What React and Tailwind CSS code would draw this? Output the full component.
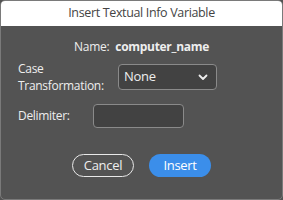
import React from 'react';

export default function App() {
  return (
    <div className="w-[283px] h-[200px] bg-[#535353] font-['Open_Sans',sans-serif]">
      <div className="w-full h-full flex flex-col rounded-[5px] border border-[#7a7a7a] overflow-hidden bg-[#535353]">
        {/* Title bar */}
        <div className="h-[25px] bg-white flex items-center justify-center text-[12.5px] text-[#444] tracking-[-0.35px]">
          Insert Textual Info Variable
        </div>

        <div className="flex-1 flex flex-col text-[#eeeeee] text-[12px] tracking-[-0.3px]">
          <div className="mt-[13px] flex justify-center gap-[6px] leading-[16px]">
            <span>Name:</span>
            <span className="font-bold">computer_name</span>
          </div>

          <div className="mt-[5px] pl-[17px] flex items-center">
            <div className="w-[100px] leading-[17px]">
              Case<br />Transformation:
            </div>
            <div className="w-[99px] h-[26px] rounded-[4px] border border-[#8a8a8a] bg-[#424242] flex items-center justify-between pl-[5px] pr-[8px] text-[13px]">
              <span>None</span>
              <svg width="10" height="7" viewBox="0 0 10 7" fill="none">
                <path d="M1.5 1.5 L5 5 L8.5 1.5" stroke="#eeeeee" strokeWidth="1.8" strokeLinecap="round" strokeLinejoin="round" />
              </svg>
            </div>
          </div>

          <div className="mt-[10px] pl-[17px] flex items-center">
            <div className="w-[75px]">Delimiter:</div>
            <div className="w-[91px] h-[24px] rounded-[4px] border border-[#8a8a8a] bg-[#424242]" />
          </div>

          <div className="mt-[26px] flex justify-center gap-[15px] text-[13px]">
            <button className="w-[62px] h-[23px] rounded-full border border-[#e8e8e8] text-[#eeeeee] flex items-center justify-center">
              Cancel
            </button>
            <button className="w-[62px] h-[23px] rounded-full bg-[#3b8eea] text-white flex items-center justify-center">
              Insert
            </button>
          </div>
        </div>
      </div>
    </div>
  );
}
